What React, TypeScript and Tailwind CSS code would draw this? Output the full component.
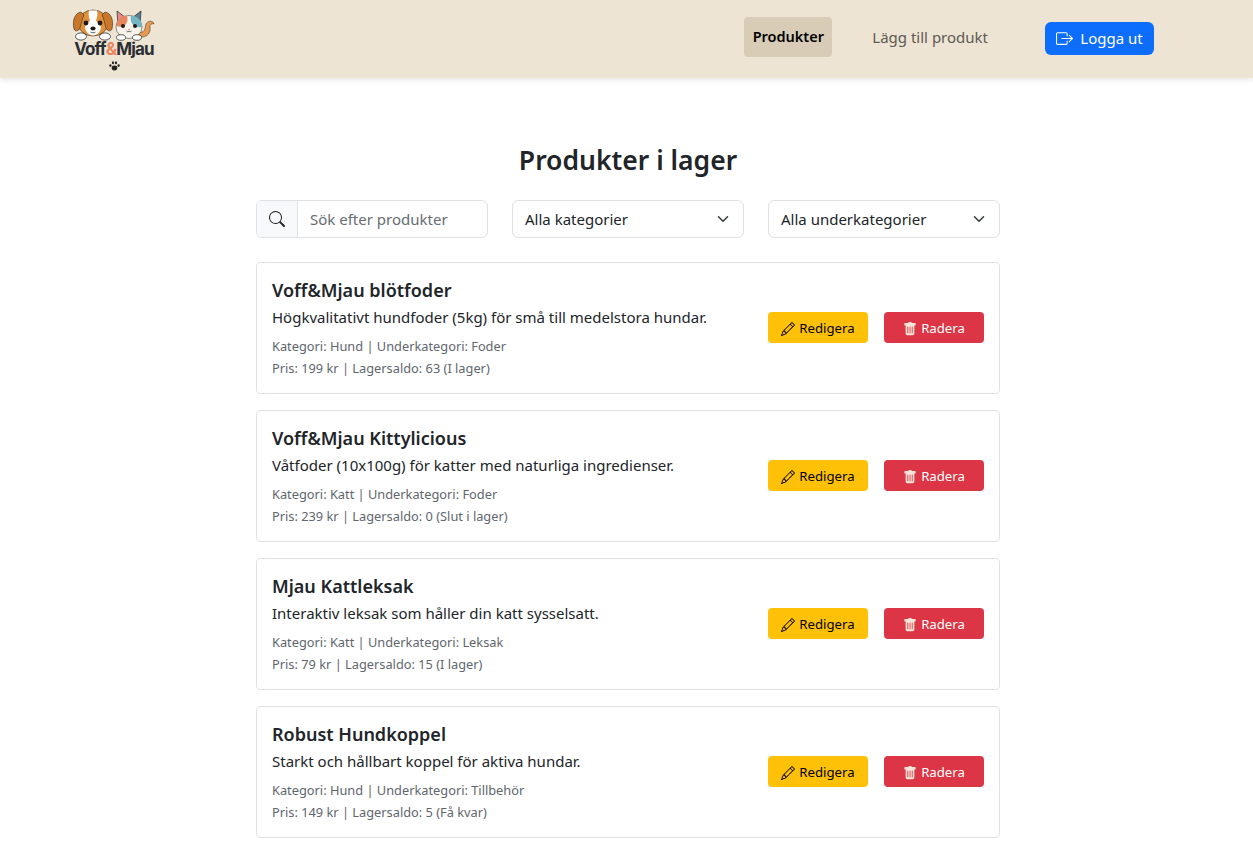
import { BsBoxArrowRight, BsPencil, BsSearch, BsTrashFill } from "react-icons/bs";
import { ChevronDown } from "lucide-react";

interface Product {
  name: string;
  description: string;
  category: string;
  sub: string;
  price: number;
  stock: number;
  status: string;
}

const products: Product[] = [
  { name: "Voff&Mjau blötfoder", description: "Högkvalitativt hundfoder (5kg) för små till medelstora hundar.", category: "Hund", sub: "Foder", price: 199, stock: 63, status: "I lager" },
  { name: "Voff&Mjau Kittylicious", description: "Våtfoder (10x100g) för katter med naturliga ingredienser.", category: "Katt", sub: "Foder", price: 239, stock: 0, status: "Slut i lager" },
  { name: "Mjau Kattleksak", description: "Interaktiv leksak som håller din katt sysselsatt.", category: "Katt", sub: "Leksak", price: 79, stock: 15, status: "I lager" },
  { name: "Robust Hundkoppel", description: "Starkt och hållbart koppel för aktiva hundar.", category: "Hund", sub: "Tillbehör", price: 149, stock: 5, status: "Få kvar" },
];

const Logo = () => (
  <div className="flex flex-col items-center w-[84px] mt-[2px]">
    <svg width="84" height="32" viewBox="0 0 84 32">
      {/* dog */}
      <ellipse cx="21" cy="14" rx="15" ry="13" fill="#e0913c" stroke="#3b2a1c" strokeWidth="0.6" />
      <path d="M17 1.500h8c1 4 0 7-1 10l5 6c0 5-4 9-8 9s-8-4-8-9l5-6c-1-3-2-6-1-10z" fill="#fff" />
      <path d="M9 3C3 4 0 11 2 20c1 3 5 2 6-1 1-4 2-9 4-13z" fill="#c9772a" stroke="#3b2a1c" strokeWidth="0.6" />
      <path d="M33 3c6 1 9 8 7 17-1 3-5 2-6-1-1-4-2-9-4-13z" fill="#c9772a" stroke="#3b2a1c" strokeWidth="0.6" />
      <circle cx="14" cy="14" r="2.400" fill="#1f1a17" />
      <circle cx="28" cy="14" r="2.400" fill="#1f1a17" />
      <ellipse cx="21" cy="19.500" rx="2.600" ry="1.900" fill="#1f1a17" />
      <path d="M18.500 23c1.500 1 3.500 1 5 0" fill="none" stroke="#1f1a17" strokeWidth="0.7" />
      <ellipse cx="9" cy="27.500" rx="5.500" ry="3.600" fill="#fff" stroke="#333" strokeWidth="0.8" />
      <ellipse cx="33" cy="27.500" rx="5.500" ry="3.600" fill="#fff" stroke="#333" strokeWidth="0.8" />
      {/* cat */}
      <path d="M64 27c9 3 15-1 14-9-.3-2 1.500-4 4-3-.5-4-8-4-8.500 2-.3 5-3 8-9.500 6z" fill="#e59a52" stroke="#3b2a1c" strokeWidth="0.5" />
      <path d="M45 2l9 7-8 6z" fill="#ee8b90" stroke="#333" strokeWidth="0.8" />
      <path d="M69 2l-9 7 8 6z" fill="#5a7f8d" stroke="#333" strokeWidth="0.8" />
      <ellipse cx="57" cy="18" rx="13" ry="11.500" fill="#f7f3ea" stroke="#444" strokeWidth="0.6" />
      <path d="M44.500 17c0-5 4-10 10-10.500 2 3 1 8-2 10-2 1.500-5 1.500-8 .5z" fill="#e8875f" />
      <path d="M59 6.500c6 0 11 5 11 11.500-4 1-9-.5-10.500-4.500-1-2.500-1-4.500-.5-7z" fill="#74b6c6" />
      <circle cx="51" cy="17" r="2" fill="#1f1a17" />
      <circle cx="63" cy="17" r="2" fill="#1f1a17" />
      <path d="M56 20h2l-1 1.200z" fill="#d9536a" />
      <path d="M54.500 22c1.200 1.200 2 1 2.500 0 .5 1 1.300 1.200 2.500 0" fill="none" stroke="#222" strokeWidth="0.7" />
      <ellipse cx="49" cy="28.500" rx="4.500" ry="2.800" fill="#fff" stroke="#333" strokeWidth="0.8" />
      <ellipse cx="65" cy="28.500" rx="4.500" ry="2.800" fill="#fff" stroke="#333" strokeWidth="0.8" />
    </svg>
    <div className="-mt-[2px] text-[17px] leading-[20px] font-bold tracking-[-0.85px] text-[#2b2f33] font-['Inter',sans-serif] whitespace-nowrap">
      Voff<span className="text-[#e8875f]">&amp;</span>Mjau
    </div>
    <svg className="mt-[2px]" width="11" height="10" viewBox="0 0 11 10" fill="#222">
      <ellipse cx="5.500" cy="7" rx="2.800" ry="2.400" />
      <ellipse cx="1.400" cy="4.600" rx="1.100" ry="1.400" />
      <ellipse cx="4" cy="1.800" rx="1.100" ry="1.500" />
      <ellipse cx="7" cy="1.800" rx="1.100" ry="1.500" />
      <ellipse cx="9.600" cy="4.600" rx="1.100" ry="1.400" />
    </svg>
  </div>
);

const Select = ({ label }: { label: string }) => (
  <div className="h-[38px] flex items-center justify-between border border-[#dee2e6] rounded-md pl-3 pr-[11px] text-[#212529]">
    <span>{label}</span>
    <ChevronDown size={18} strokeWidth={2} className="text-[#343a40]" />
  </div>
);

const Card = ({ p }: { p: Product }) => (
  <div className="h-[132px] flex items-center justify-between border border-[#dee2e6] rounded-[4px] px-[15px]">
    <div>
      <h3 className="text-[18px] leading-6 font-semibold text-[#212529] mt-[1px]">{p.name}</h3>
      <p className="mt-[3px] leading-6 text-[#212529]">{p.description}</p>
      <p className="mt-[6px] text-[12.8px] leading-[22px] text-[#5f666d]">
        Kategori: {p.category} | Underkategori: {p.sub}
        <br />
        Pris: {p.price} kr | Lagersaldo: {p.stock} ({p.status})
      </p>
    </div>
    <div className="flex gap-4 mb-px">
      <button className="w-[100px] h-[31px] pt-[2px] flex items-center justify-center gap-1 rounded bg-[#ffc107] text-[13.2px] text-black">
        <BsPencil size={14} />
        Redigera
      </button>
      <button className="w-[100px] h-[31px] pt-[2px] flex items-center justify-center gap-1 rounded bg-[#dc3545] text-[13.2px] text-white">
        <BsTrashFill size={14} className="text-[#fde4d8]" />
        Radera
      </button>
    </div>
  </div>
);

export default function App() {
  return (
    <div className="min-h-screen bg-white font-['Noto_Sans',sans-serif] text-[15px]">
      <header className="h-[78px] bg-[#ede4d3] shadow-[0_2px_5px_rgba(0,0,0,0.1)]">
        <div className="h-full flex items-center justify-between pl-[72px] pr-[99px]">
          <Logo />
          <nav className="flex items-center mb-[4px]">
            <a className="h-10 w-[88px] flex items-center justify-center rounded bg-[#d9ccb6] text-[14.5px] font-semibold text-black">Produkter</a>
            <a className="ml-[40px] text-[#5c5a55]">Lägg till produkt</a>
            <button className="ml-[57px] mt-[3px] w-[109px] h-[33px] flex items-center justify-center gap-[7px] rounded-md bg-[#0d6efd] text-white">
              <BsBoxArrowRight size={17} />
              Logga ut
            </button>
          </nav>
        </div>
      </header>

      <main className="w-[744px] ml-[256px] pt-[64px]">
        <h1 className="text-center text-[26.500px] leading-9 font-semibold text-[#212529]">Produkter i lager</h1>
        <div className="mt-[22px] grid grid-cols-3 gap-6">
          <div className="h-[38px] flex border border-[#dee2e6] rounded-md overflow-hidden">
            <div className="w-[41px] flex items-center justify-center bg-[#f8f9fa] border-r border-[#dee2e6] text-[#212529]">
              <BsSearch size={16} />
            </div>
            <div className="flex items-center pl-3 text-[#666d74]">Sök efter produkter</div>
          </div>
          <Select label="Alla kategorier" />
          <Select label="Alla underkategorier" />
        </div>
        <div className="mt-6 flex flex-col gap-4">
          {products.map((p) => (
            <Card key={p.name} p={p} />
          ))}
        </div>
      </main>
    </div>
  );
}
